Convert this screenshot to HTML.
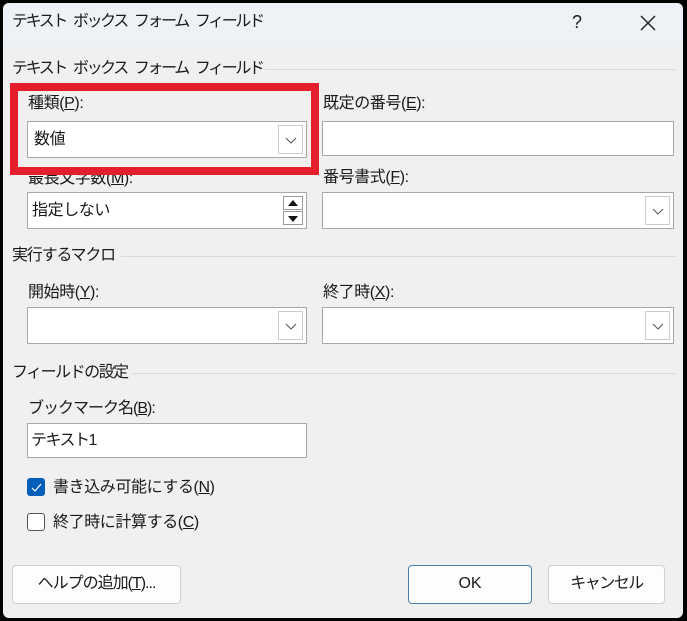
<!DOCTYPE html><html><head><meta charset="utf-8"><style>
*{box-sizing:border-box;margin:0;padding:0}
body{width:687px;height:621px;background:#000;position:relative;overflow:hidden;font-family:"Liberation Sans","Noto Sans CJK JP",sans-serif;font-size:16px;color:#1a1a1a}
.dlg{position:absolute;left:3px;top:3px;width:680px;height:615px;background:#f0f0f0;border-radius:6px;overflow:hidden}
.tb{position:absolute;left:0;top:0;width:100%;height:44px;background:#eef2f6}
.a{position:absolute;white-space:nowrap;line-height:20px;letter-spacing:-0.4px}
.k{letter-spacing:-2.4px;word-spacing:5px}
.in{position:absolute;background:#fff;border:1px solid #a8a8a8}
.dd{position:absolute;right:3px;top:3px;bottom:3px;width:25px;border:1px solid #ccc;background:#fff}
.dd svg{position:absolute;left:6px;top:50%;margin-top:-3px}
.ln{position:absolute;height:1px;background:#d8d8d8}
.btn{position:absolute;background:#fdfdfd;border:1px solid #d0d0d0;border-radius:4px;text-align:center;line-height:36px}
.cb{position:absolute;width:18px;height:18px;border:1px solid #555;border-radius:3px;background:#fff}
u{text-decoration:underline}
</style></head><body>
<div class="dlg">
<div class="tb"></div>
<div class="a k" style="left:9px;top:9px">テキスト ボックス フォーム フィールド</div>
<div class="a" style="left:569px;top:9px;font-size:18px">?</div>
<svg style="position:absolute;left:637px;top:12px" width="16" height="16"><path d="M1 1L15 15M15 1L1 15" stroke="#222" stroke-width="1.5"/></svg>
<div class="a k" style="left:9px;top:56px">テキスト ボックス フォーム フィールド</div>
<div class="ln" style="left:262px;top:66px;width:410px"></div>
<div class="a" style="left:25px;top:91px">種類(<u>P</u>):</div>
<div class="in" style="left:24px;top:118px;width:280px;height:37px"><div class="a" style="left:6px;top:8px">数値</div><div class="dd"><svg width="12" height="7"><path d="M1 1L6 6L11 1" stroke="#555" fill="none"/></svg></div></div>
<div class="a" style="left:320px;top:91px">既定の番号(<u>E</u>):</div>
<div class="in" style="left:319px;top:118px;width:352px;height:35px"></div>
<div class="a" style="left:25px;top:166px">最長文字数(<u>M</u>):</div>
<div class="in" style="left:24px;top:189px;width:280px;height:37px"><div class="a" style="left:4px;top:8px">指定しない</div>
<div style="position:absolute;right:3px;top:3px;width:20px;height:14px;border:1px solid #999;background:#fff"><svg style="position:absolute;left:4px;top:3px" width="10" height="6"><path d="M0 6L5 0L10 6Z" fill="#111"/></svg></div>
<div style="position:absolute;right:3px;top:18px;width:20px;height:14px;border:1px solid #999;background:#fff"><svg style="position:absolute;left:4px;top:4px" width="10" height="6"><path d="M0 0L5 6L10 0Z" fill="#111"/></svg></div></div>
<div class="a" style="left:320px;top:165px">番号書式(<u>F</u>):</div>
<div class="in" style="left:319px;top:189px;width:352px;height:37px"><div class="dd"><svg width="12" height="7"><path d="M1 1L6 6L11 1" stroke="#555" fill="none"/></svg></div></div>
<div style="position:absolute;left:7px;top:80px;width:309px;height:92px;border:8px solid #e41e2a"></div>
<div class="a" style="left:9px;top:243px;letter-spacing:-1.2px">実行するマクロ</div>
<div class="ln" style="left:118px;top:253px;width:554px"></div>
<div class="a" style="left:25px;top:280px">開始時(<u>Y</u>):</div>
<div class="in" style="left:24px;top:304px;width:280px;height:37px"><div class="dd"><svg width="12" height="7"><path d="M1 1L6 6L11 1" stroke="#555" fill="none"/></svg></div></div>
<div class="a" style="left:320px;top:280px">終了時(<u>X</u>):</div>
<div class="in" style="left:319px;top:304px;width:352px;height:37px"><div class="dd"><svg width="12" height="7"><path d="M1 1L6 6L11 1" stroke="#555" fill="none"/></svg></div></div>
<div class="a" style="left:9px;top:360px;letter-spacing:-1.5px">フィールドの設定</div>
<div class="ln" style="left:130px;top:370px;width:542px"></div>
<div class="a" style="left:25px;top:396px;letter-spacing:-1px">ブックマーク名(<u>B</u>):</div>
<div class="in" style="left:24px;top:420px;width:280px;height:35px"><div class="a" style="left:3px;top:7px;letter-spacing:-1.5px">テキスト1</div></div>
<div class="cb" style="left:24px;top:475px;background:#005fb8;border-color:#005fb8"><svg style="position:absolute;left:3px;top:4px" width="11" height="9"><path d="M1 5L4 8L10 1" stroke="#fff" fill="none" stroke-width="1.2"/></svg></div>
<div class="a" style="left:50px;top:475px">書き込み可能にする(<u>N</u>)</div>
<div class="cb" style="left:24px;top:510px"></div>
<div class="a" style="left:50px;top:510px">終了時に計算する(<u>C</u>)</div>
<div class="btn" style="left:9px;top:562px;width:169px;height:39px;letter-spacing:-1px">ヘルプの追加(<u>T</u>)...</div>
<div class="btn" style="left:405px;top:562px;width:124px;height:39px;border-color:#4a7fb0">OK</div>
<div class="btn" style="left:545px;top:562px;width:117px;height:39px;letter-spacing:-1.5px">キャンセル</div>
</div>
</body></html>
